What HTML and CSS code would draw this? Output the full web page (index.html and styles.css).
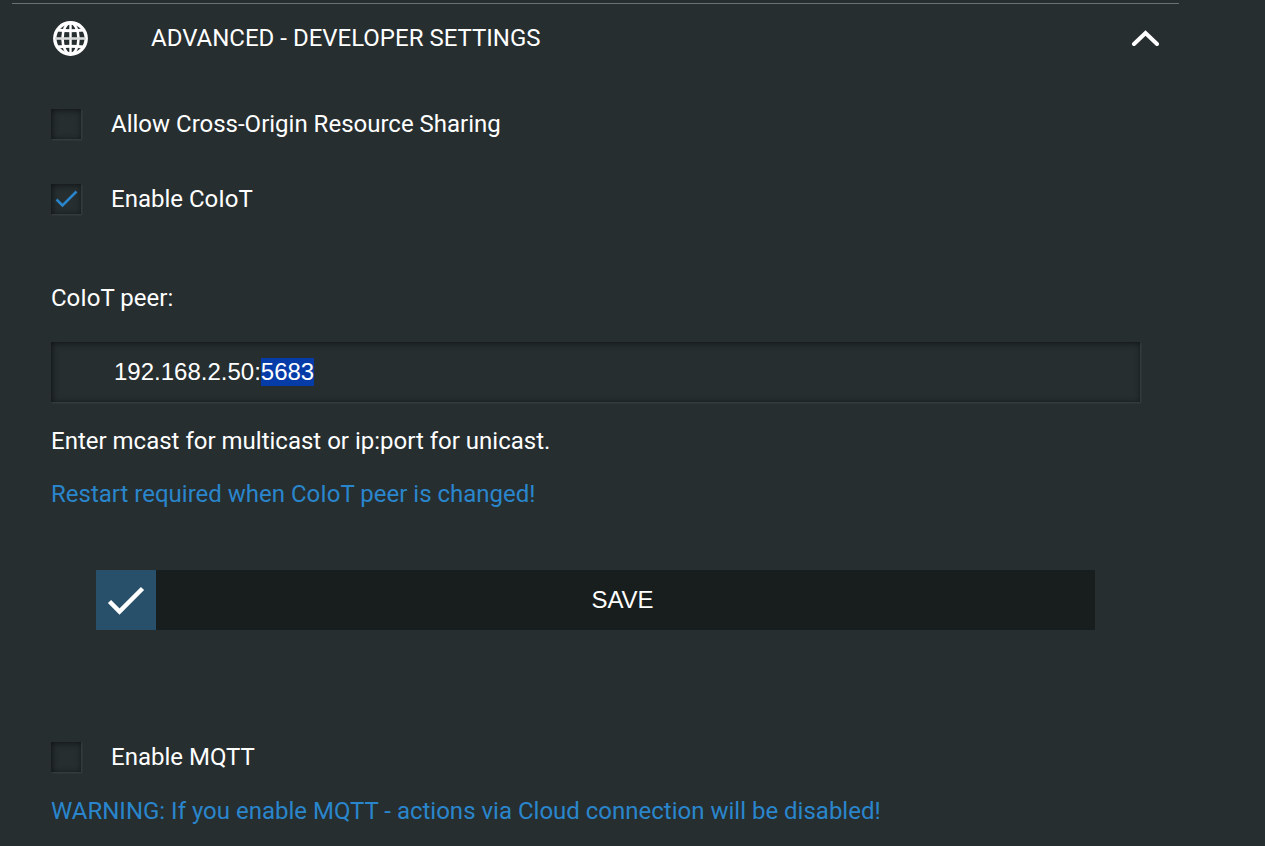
FILE: index.html
```html
<!DOCTYPE html>
<html lang="en">
<head>
  <meta charset="UTF-8">
  <meta name="viewport" content="width=device-width, initial-scale=1.0">
  <title>Developer Settings</title>
  <link rel="stylesheet" href="styles.css">
</head>
<body>
  <section class="panel">
    <h2 class="panel-title">
      <button class="panel-header" type="button" aria-expanded="true">
        <svg class="globe" viewBox="0 0 36 36" fill="none" stroke="#fff">
          <circle cx="18.5" cy="18.5" r="15.7" stroke-width="3.4"/>
          <ellipse cx="18.5" cy="18.5" rx="8" ry="15.5" stroke-width="2.6"/>
          <path d="M18.5 3v31" stroke-width="2.4"/>
          <path d="M3 18.5h31" stroke-width="2.6" stroke="#d8dada"/>
          <path d="M5 10q13.5 1.5 27 0M5 27q13.5 -1.5 27 0" stroke-width="2.8"/>
        </svg>
        <span class="panel-name">ADVANCED - DEVELOPER SETTINGS</span>
        <svg class="chevron" viewBox="0 0 28 18" fill="none" stroke="#fff" stroke-width="4" stroke-linecap="round">
          <path d="M3 15L14.5 4L26 15"/>
        </svg>
      </button>
    </h2>

    <form class="panel-body">
      <label class="check-row">
        <input class="check" type="checkbox">
        <span>Allow Cross-Origin Resource Sharing</span>
      </label>
      <label class="check-row">
        <input class="check" type="checkbox" checked>
        <span>Enable CoIoT</span>
      </label>

      <label class="field-label" for="peer">CoIoT peer:</label>
      <input class="field" id="peer" type="text" value="192.168.2.50:5683" spellcheck="false">
      <p class="hint">Enter mcast for multicast or ip:port for unicast.</p>
      <p class="notice">Restart required when CoIoT peer is changed!</p>

      <button class="save" type="button">
        <span class="save-icon">
          <svg viewBox="0 0 60 60" fill="none" stroke="#fff" stroke-width="4.5">
            <path d="M13.5 31.5L23.5 41.5L46.5 18.5"/>
          </svg>
        </span>
        <span class="save-text">SAVE</span>
      </button>

      <label class="check-row">
        <input class="check" type="checkbox">
        <span>Enable MQTT</span>
      </label>
      <p class="notice">WARNING: If you enable MQTT - actions via Cloud connection will be disabled!</p>
    </form>
  </section>

  <script>
    // Select the port so it can be typed over
    const peer = document.getElementById('peer');
    peer.focus();
    peer.setSelectionRange(peer.value.indexOf(':') + 1, peer.value.length);
  </script>
</body>
</html>
```

FILE: styles.css
```css
* {
  box-sizing: border-box;
}

body {
  margin: 0;
  padding: 3px 86px 0 12px;
  background: #262e30;
  color: #fff;
  font-family: Roboto, sans-serif;
  font-size: 24px;
  line-height: 30px;
}

.panel {
  border-top: 1px solid #6b7071;
}

.panel-title {
  margin: 0;
  font-size: 24px;
  font-weight: normal;
}

.panel-header {
  display: flex;
  align-items: center;
  width: 100%;
  height: 68px;
  padding: 0 20px 0 40px;
  border: 0;
  background: none;
  color: inherit;
  font: inherit;
  text-align: left;
}

.globe {
  width: 36px;
  height: 36px;
}

.panel-name {
  flex: 1;
  margin-left: 63px;
}

.chevron {
  width: 28px;
  height: 18px;
}

.panel-body {
  padding: 37px 39px 20px;
}

.check-row {
  display: flex;
  align-items: center;
  gap: 30px;
  margin-bottom: 45px;
}

/* Sunken boxes */
.check,
.field {
  margin: 0;
  border: 0;
  border-radius: 0;
  background: transparent;
  box-shadow: inset 1px 1px 6px rgba(0, 0, 0, 0.6), 1px 1px 2px rgba(255, 255, 255, 0.1);
  appearance: none;
}

.check {
  width: 30px;
  height: 30px;
}

.check:checked {
  background: url("data:image/svg+xml,%3Csvg xmlns='http://www.w3.org/2000/svg' viewBox='0 0 30 30'%3E%3Cpath d='M5.5 15.5l6 6L25.5 7.5' fill='none' stroke='%232a86cc' stroke-width='2.5'/%3E%3C/svg%3E") center no-repeat;
}

.field-label {
  display: block;
  padding-top: 24px;
  margin-bottom: 29px;
}

.field {
  display: block;
  width: 100%;
  height: 60px;
  padding: 0 63px;
  color: #fff;
  font-family: "Liberation Sans", Arial, sans-serif;
  font-size: 24px;
  outline: none;
}

.field::selection {
  background: #063ca8;
  color: #fff;
}

.hint {
  margin: 24px 0 23px;
}

.notice {
  margin: 0;
  color: #2a86cc;
}

.save {
  display: flex;
  align-items: center;
  width: calc(100% - 90px);
  height: 60px;
  margin: 61px 45px 112px;
  padding: 0;
  border: 0;
  background: #181d1d;
  color: #fff;
  font-family: "Liberation Sans", Arial, sans-serif;
  font-size: 24px;
}

.save-icon {
  width: 60px;
  height: 60px;
  background: #29506b;
}

.save-icon svg {
  display: block;
}

.save-text {
  flex: 1;
  padding-right: 6px;
}

.save ~ .check-row {
  margin-bottom: 24px;
}
```
